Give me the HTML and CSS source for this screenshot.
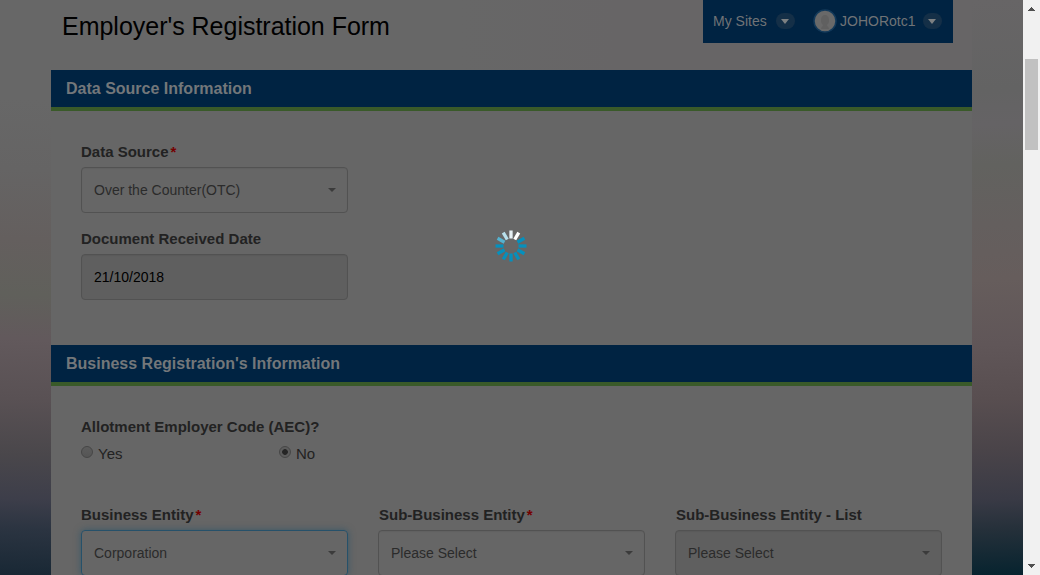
FILE: index.html
```html
<!DOCTYPE html>
<html lang="en">
<head>
<meta charset="utf-8">
<title>Employer's Registration Form</title>
<link rel="stylesheet" href="styles.css">
</head>
<body>
<div class="window">
  <div class="page">
    <header class="top">
      <h1 class="title">Employer's Registration Form</h1>
      <nav class="dock">
        <span class="sites">My Sites</span>
        <span class="pill"><i class="tri"></i></span>
        <svg class="avatar" width="24" height="24" viewBox="0 0 24 24"><circle cx="12" cy="12" r="11" fill="#696969" stroke="#12395a" stroke-width="1.5"/><path d="M8 20c0-2 2-2.5 2-4-1.500-1-2-3-2-5 0-3 1.700-5 4-5s4 2 4 5c0 2-.5 4-2 5 0 1.500 2 2 2 4z" fill="#606060"/></svg>
        <span class="user">JOHORotc1</span>
        <span class="pill"><i class="tri"></i></span>
      </nav>
    </header>
    <section class="panel first">
      <h2 class="bar">Data Source Information</h2>
      <div class="fields">
        <div class="field">
          <label class="label">Data Source<span class="req">*</span></label>
          <div class="control"><span>Over the Counter(OTC)</span><i class="caret"></i></div>
        </div>
        <div class="field">
          <label class="label">Document Received Date</label>
          <div class="control disabled date"><span>21/10/2018</span></div>
        </div>
      </div>
    </section>
    <section class="panel">
      <h2 class="bar">Business Registration's Information</h2>
      <div class="fields">
        <div class="label">Allotment Employer Code (AEC)?</div>
        <div class="radios">
          <span class="option"><i class="radio"></i>Yes</span>
          <span class="option"><i class="radio on"></i>No</span>
        </div>
        <div class="columns">
          <div class="field">
            <label class="label">Business Entity<span class="req">*</span></label>
            <div class="control focus"><span>Corporation</span><i class="caret"></i></div>
          </div>
          <div class="field">
            <label class="label">Sub-Business Entity<span class="req">*</span></label>
            <div class="control"><span>Please Select</span><i class="caret"></i></div>
          </div>
          <div class="field">
            <label class="label">Sub-Business Entity - List</label>
            <div class="control disabled"><span>Please Select</span><i class="caret"></i></div>
          </div>
        </div>
      </div>
    </section>
    <svg class="spinner" width="34" height="34" viewBox="-17 -17 34 34" stroke-width="3.300" stroke-linecap="butt">
      <path d="M0-7.500V-15.500" stroke="#e6f0f4"/>
      <path d="M0-7.500V-15.500" stroke="#fff" transform="rotate(30)"/>
      <path d="M0-7.500V-15.500" stroke="#0590bd" transform="rotate(60)"/>
      <path d="M0-7.500V-15.500" stroke="#0590bd" transform="rotate(90)"/>
      <path d="M0-7.500V-15.500" stroke="#0590bd" transform="rotate(120)"/>
      <path d="M0-7.500V-15.500" stroke="#0590bd" transform="rotate(150)"/>
      <path d="M0-7.500V-15.500" stroke="#0590bd" transform="rotate(180)"/>
      <path d="M0-7.500V-15.500" stroke="#0590bd" transform="rotate(210)"/>
      <path d="M0-7.500V-15.500" stroke="#0590bd" transform="rotate(240)"/>
      <path d="M0-7.500V-15.500" stroke="#0590bd" transform="rotate(270)"/>
      <path d="M0-7.500V-15.500" stroke="#55b2cf" transform="rotate(300)"/>
      <path d="M0-7.500V-15.500" stroke="#b8dfeb" transform="rotate(330)"/>
    </svg>
  </div>
  <div class="scrollbar">
    <svg width="7" height="4" viewBox="0 0 7 4" shape-rendering="crispEdges"><path d="M0 4L3.500 0 7 4z" fill="#505050"/></svg>
    <div class="track"><div class="thumb"></div></div>
    <svg width="7" height="4" viewBox="0 0 7 4" shape-rendering="crispEdges"><path d="M0 0h7L3.500 4z" fill="#505050"/></svg>
  </div>
</div>
</body>
</html>
```
FILE: styles.css
```css
* { box-sizing: border-box; }
body { margin: 0; font-family: "Liberation Sans", Arial, sans-serif; overflow: hidden; }
.window { display: flex; width: 1040px; height: 575px; overflow: hidden; }
.page {
  position: relative; width: 1023px; height: 575px; padding: 0 51px; overflow: hidden;
  background:
    linear-gradient(178deg, #676566 0, #636363 90px, #656365 125px, #62625f 165px, #645f5e 225px, #665d5c 280px, #605658 345px, #584e50 400px, #4a4449 450px, #393a45 500px, #25303a 530px, #04222e 580px) right / 51px 100% no-repeat,
    linear-gradient(182deg, #676767 0, #676767 100px, #656464 170px, #645f5e 240px, #60605b 295px, #62595c 340px, #595154 400px, #4a474b 455px, #3d3e4a 500px, #2b3441 530px, #192835 575px) left / 51px 100% no-repeat,
    linear-gradient(90deg, #676767 45%, #676566 60%, #676566);
}
.top { display: flex; justify-content: space-between; height: 70px; padding: 0 19px 0 11px; }
.title { margin: 12px 0 0; font-size: 25px; line-height: 29px; font-weight: 400; color: #000; letter-spacing: -.02px; white-space: nowrap; }
.dock { display: flex; align-items: center; width: 250px; height: 43px; padding: 0 0 1px 10px; background: #002342; color: #707376; font-size: 14px; white-space: nowrap; }
.sites { width: 63px; }
.pill { display: flex; align-items: center; justify-content: center; width: 19px; height: 16px; border-radius: 8px; background: #142f47; }
.tri { width: 0; height: 0; border: 4.5px solid transparent; border-top: 5px solid #7d8082; border-bottom: 0; margin-right: 2px; }
.avatar { margin: 0 3px 0 18px; }
.user { width: 83px; }
.panel { background: #666; }
.first { height: 275px; }
.bar { height: 41px; margin: 0; padding: 0 15px; border-bottom: 4px solid #3a5a29; background: #002342; color: #73777a; font-size: 16px; line-height: 37px; font-weight: 700; }
.fields { padding: 32px 30px 0; }
.field { width: 267px; margin-bottom: 17px; }
.label { display: block; height: 24px; font-size: 15px; line-height: 18px; font-weight: 700; color: #222; white-space: nowrap; }
.req { margin-left: 2px; color: #750000; }
.control { display: flex; align-items: center; justify-content: space-between; height: 46px; padding: 0 11px 0 12px; border: 1px solid #525252; border-radius: 4px; color: #2b2b2b; font-size: 14px; box-shadow: inset 0 1px 1px rgba(0,0,0,.05); }
.disabled { background: #5f5f5f; }
.date { color: #000; }
.focus { border-color: #26516a; box-shadow: 0 0 7px rgba(28,78,105,.6); }
.caret { width: 0; height: 0; border: 4px solid transparent; border-top-color: #3b3b3b; border-bottom: 0; }
.radios { display: flex; height: 64px; padding-top: 2px; }
.option { display: flex; width: 198px; font-size: 15px; line-height: 20px; color: #222; }
.radio { width: 12px; height: 12px; margin: 2px 5px 0 0; border: 1px solid #464646; border-radius: 50%; background: linear-gradient(#5c5c5c, #555); }
.on { background: radial-gradient(circle, #252525 0 2.500px, #5c5c5c 3.200px); }
.columns { display: grid; grid-template-columns: repeat(3, 297px); }
.columns .field + .field .label { padding-left: 1px; }
.spinner { position: absolute; left: 494px; top: 229px; }
.scrollbar { display: flex; flex-direction: column; align-items: center; width: 17px; height: 575px; padding: 7px 0; background: #f1f1f1; }
.track { flex: 1; width: 13px; padding-top: 48px; }
.thumb { height: 91px; background: #c1c1c1; }
```
